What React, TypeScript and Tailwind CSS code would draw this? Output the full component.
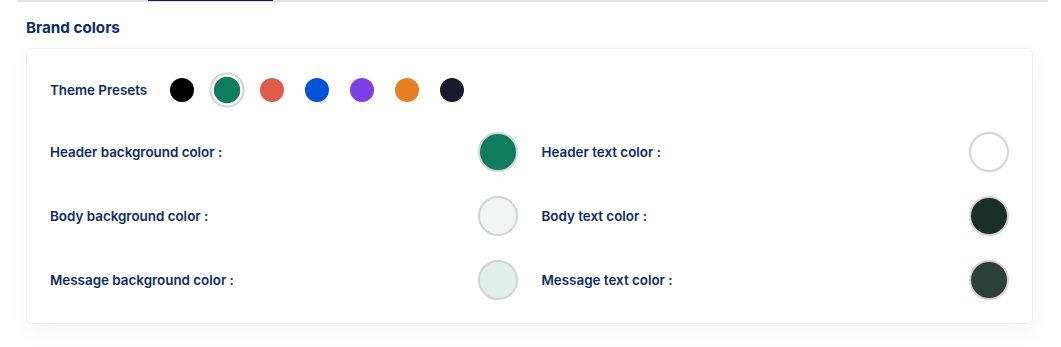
import { useState } from 'react';

const presets = ['#000000', '#0f7b5f', '#e15b4a', '#0052d9', '#7c3fe6', '#e67e22', '#1a1a2e'];

interface ColorRowProps {
    label: string;
    color: string;
}

const ColorRow = ({ label, color }: ColorRowProps) => (
    <div className="flex items-center justify-between h-10">
        <span className="text-[13.4px] font-semibold text-[#0b2c68]">{label}</span>
        <button
            className="w-10 h-10 rounded-full border-2 border-[#d4d4d4]"
            style={{ backgroundColor: color }}
        />
    </div>
);

export default function App() {
    const [selected, setSelected] = useState(1);

    return (
        <div className="bg-white w-[1061px] h-[347px] overflow-hidden font-['Inter',sans-serif]">
            {/* tabs underline */}
            <div className="ml-[18px] w-[1030px] h-[2px] bg-[#e2e2e2] flex">
                <div className="ml-[130px] w-[125px] h-[1px] bg-[#1e1b4b]" />
            </div>

            <div className="ml-[26px] w-[1007px]">
                <h2 className="mt-[15px] h-[22px] leading-[22px] text-[15.2px] font-bold text-[#0b2c68]">
                    Brand colors
                </h2>

                <div className="mt-[9px] rounded-md border border-[#f0f0f0] bg-white shadow-[0_8px_24px_rgba(0,0,0,0.04)] p-[23px] flex flex-col gap-6">
                    <div className="flex items-center h-9">
                        <span className="w-[120px] text-[13.4px] font-semibold text-[#0b2c68]">Theme Presets</span>
                        <div className="flex items-center gap-[21px]">
                            {presets.map((c, i) => (
                                <button
                                    key={c}
                                    onClick={() => setSelected(i)}
                                    className={
                                        i === selected
                                            ? 'w-6 h-6 rounded-full scale-110 ring-2 ring-[#d4d4d4] ring-offset-2'
                                            : 'w-6 h-6 rounded-full'
                                    }
                                    style={{ backgroundColor: c }}
                                />
                            ))}
                        </div>
                    </div>

                    <div className="grid grid-cols-2 gap-x-6 gap-y-6">
                        <ColorRow label="Header background color :" color="#0f7b5f" />
                        <ColorRow label="Header text color :" color="#ffffff" />
                        <ColorRow label="Body background color :" color="#f1f5f3" />
                        <ColorRow label="Body text color :" color="#1b2e27" />
                        <ColorRow label="Message background color :" color="#e2eee9" />
                        <ColorRow label="Message text color :" color="#2d3f38" />
                    </div>
                </div>
            </div>
        </div>
    );
}
